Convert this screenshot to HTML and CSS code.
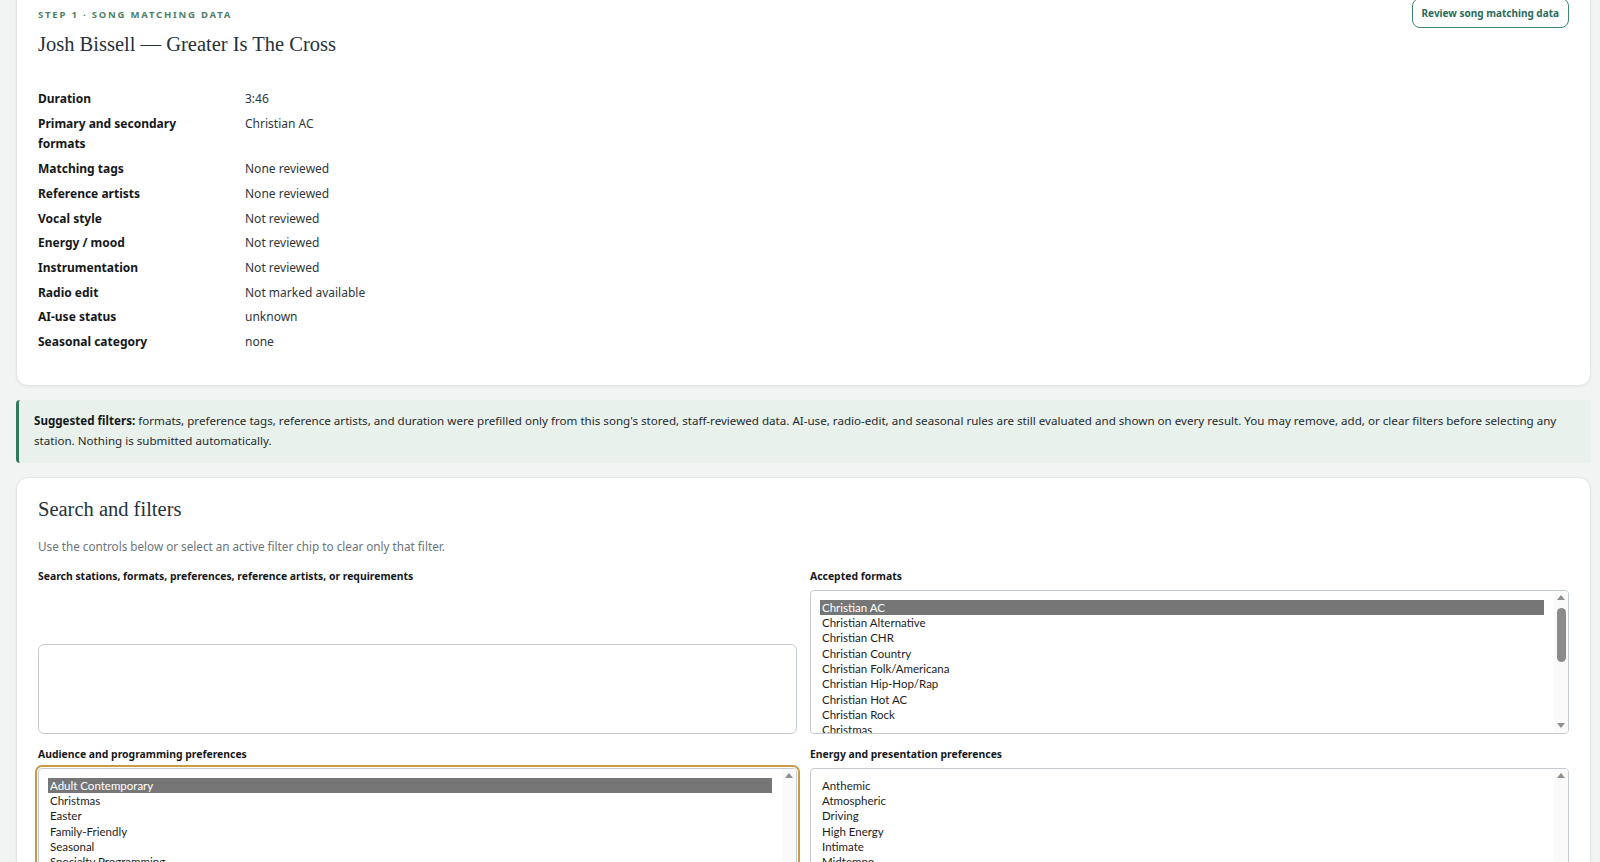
FILE: index.html
```html
<!doctype html>
<html lang="en">
<head>
    <meta charset="utf-8">
    <meta name="viewport" content="width=device-width, initial-scale=1">
    <title>Station matching — Josh Bissell</title>
    <link rel="stylesheet" href="styles.css">
</head>
<body>
<main class="page">

    <!-- Step 1: what we know about the song -->
    <section class="card song-card">
        <div class="card-head">
            <div>
                <p class="eyebrow">Step 1 · Song matching data</p>
                <h2 class="song-title">Josh Bissell — Greater Is The Cross</h2>
            </div>
            <button type="button" class="btn-outline">Review song matching data</button>
        </div>

        <dl class="song-data">
            <dt>Duration</dt><dd>3:46</dd>
            <dt>Primary and secondary formats</dt><dd>Christian AC</dd>
            <dt>Matching tags</dt><dd>None reviewed</dd>
            <dt>Reference artists</dt><dd>None reviewed</dd>
            <dt>Vocal style</dt><dd>Not reviewed</dd>
            <dt>Energy / mood</dt><dd>Not reviewed</dd>
            <dt>Instrumentation</dt><dd>Not reviewed</dd>
            <dt>Radio edit</dt><dd>Not marked available</dd>
            <dt>AI-use status</dt><dd>unknown</dd>
            <dt>Seasonal category</dt><dd>none</dd>
        </dl>
    </section>

    <p class="notice"><strong>Suggested filters:</strong> formats, preference tags, reference artists, and duration were prefilled only from this song's stored, staff-reviewed data. AI-use, radio-edit, and seasonal rules are still evaluated and shown on every result. You may remove, add, or clear filters before selecting any station. Nothing is submitted automatically.</p>

    <!-- Filters -->
    <section class="card filters">
        <h2 class="section-title">Search and filters</h2>
        <p class="hint">Use the controls below or select an active filter chip to clear only that filter.</p>

        <div class="filter-grid">
            <div class="field">
                <label for="search">Search stations, formats, preferences, reference artists, or requirements</label>
                <textarea id="search" class="search-box"></textarea>
            </div>

            <div class="field">
                <span class="field-label" id="formats-label">Accepted formats</span>
                <div class="listbox" role="listbox" aria-multiselectable="true" aria-labelledby="formats-label">
                    <div class="listbox-options">
                        <div class="opt is-selected" role="option" aria-selected="true">Christian AC</div>
                        <div class="opt" role="option">Christian Alternative</div>
                        <div class="opt" role="option">Christian CHR</div>
                        <div class="opt" role="option">Christian Country</div>
                        <div class="opt" role="option">Christian Folk/Americana</div>
                        <div class="opt" role="option">Christian Hip-Hop/Rap</div>
                        <div class="opt" role="option">Christian Hot AC</div>
                        <div class="opt" role="option">Christian Rock</div>
                        <div class="opt" role="option">Christmas</div>
                    </div>
                    <div class="scrollbar">
                        <span class="sb-up"></span>
                        <span class="sb-track"><span class="sb-thumb"></span></span>
                        <span class="sb-down"></span>
                    </div>
                </div>
            </div>

            <div class="field">
                <span class="field-label" id="audience-label">Audience and programming preferences</span>
                <div class="listbox is-focused" role="listbox" aria-multiselectable="true" aria-labelledby="audience-label">
                    <div class="listbox-options">
                        <div class="opt is-selected" role="option" aria-selected="true">Adult Contemporary</div>
                        <div class="opt" role="option">Christmas</div>
                        <div class="opt" role="option">Easter</div>
                        <div class="opt" role="option">Family-Friendly</div>
                        <div class="opt" role="option">Seasonal</div>
                        <div class="opt" role="option">Specialty Programming</div>
                        <div class="opt" role="option">Sunday Morning</div>
                        <div class="opt" role="option">Weekend</div>
                        <div class="opt" role="option">Youth</div>
                    </div>
                    <div class="scrollbar">
                        <span class="sb-up"></span>
                        <span class="sb-track"></span>
                        <span class="sb-down"></span>
                    </div>
                </div>
            </div>

            <div class="field">
                <span class="field-label" id="energy-label">Energy and presentation preferences</span>
                <div class="listbox" role="listbox" aria-multiselectable="true" aria-labelledby="energy-label">
                    <div class="listbox-options">
                        <div class="opt" role="option">Anthemic</div>
                        <div class="opt" role="option">Atmospheric</div>
                        <div class="opt" role="option">Driving</div>
                        <div class="opt" role="option">High Energy</div>
                        <div class="opt" role="option">Intimate</div>
                        <div class="opt" role="option">Midtempo</div>
                        <div class="opt" role="option">Reflective</div>
                        <div class="opt" role="option">Uplifting</div>
                        <div class="opt" role="option">Worship-Led</div>
                    </div>
                    <div class="scrollbar">
                        <span class="sb-up"></span>
                        <span class="sb-track"></span>
                        <span class="sb-down"></span>
                    </div>
                </div>
            </div>
        </div>
    </section>

</main>
</body>
</html>
```

FILE: styles.css
```css
/* Reset */
* { box-sizing: border-box; padding: 0; margin: 0; }

/* CSS Variables */
:root {
    --page: #f2f4f3;
    --card-line: #e2e7e5;
    --ink: #1c1f22;
    --ink-soft: #30363b;
    --heading: #25313b;
    --muted: #6c7479;
    --green: #2f7a5a;
    --green-text: #2b6a59;
    --green-wash: #e8f1ec;
    --field-line: #c5ccd1;
    --focus: #c99b45;
    --sans: "Noto Sans", "Segoe UI", sans-serif;
    --serif: "Liberation Serif", serif;
}

html { scrollbar-width: none; }

body {
    background-color: var(--page);
    font-family: var(--sans);
    font-size: 12px;
    color: var(--ink);
}

/* Page Style */
.page {
    display: flex;
    flex-direction: column;
    gap: 14px;
    margin-top: -24px;
    padding: 0 9px 40px 16px;
}

.card {
    background: #fff;
    border: 1px solid var(--card-line);
    border-radius: 12px;
    box-shadow: 0 1px 3px rgba(30, 50, 40, 0.06);
}

/* Song card */
.song-card { padding: 21px 21px 32px; }
.card-head {
    display: flex;
    justify-content: space-between;
    align-items: flex-start;
}
.eyebrow {
    margin-top: 10px;
    font-size: 9.5px;
    line-height: 14px;
    font-weight: 700;
    letter-spacing: 1.8px;
    text-transform: uppercase;
    color: #4f8069;
}
.song-title,
.section-title {
    font-family: var(--serif);
    font-size: 20.5px;
    font-weight: 400;
    color: var(--heading);
}
.song-title { margin-top: 9px; line-height: 26px; }

.btn-outline {
    height: 30px;
    padding: 0 9px;
    background: #fff;
    border: 1px solid #3f8470;
    border-radius: 8px;
    font-family: var(--sans);
    font-size: 10px;
    font-weight: 700;
    color: var(--green-text);
}

.song-data {
    display: grid;
    grid-template-columns: 180px 1fr;
    column-gap: 27px;
    row-gap: 4px;
    margin-top: 32px;
    line-height: 20.7px;
}
.song-data dt { font-weight: 700; color: #15181a; }
.song-data dd { color: var(--ink-soft); }

/* Suggested filters notice */
.notice {
    padding: 11px 15px 12px;
    background: var(--green-wash);
    border-left: 3px solid var(--green);
    border-radius: 4px;
    font-size: 11.6px;
    line-height: 20px;
    color: #272b2e;
}
.notice strong { color: #15181a; }

/* Filters card */
.filters { padding: 19px 21px 24px; }
.section-title { line-height: 24px; }
.hint {
    margin-top: 16px;
    line-height: 18px;
    font-size: 11.7px;
    color: var(--muted);
}

.filter-grid {
    display: grid;
    grid-template-columns: 1fr 1fr;
    column-gap: 13px;
    row-gap: 12px;
    margin-top: 13px;
}
.field {
    display: flex;
    flex-direction: column;
}
.field label,
.field-label {
    font-size: 10.4px;
    line-height: 16px;
    font-weight: 700;
    color: #15181a;
    margin-bottom: 6px;
}

.search-box {
    margin-top: auto;
    height: 90px;
    width: 100%;
    resize: none;
    border: 1px solid var(--field-line);
    border-radius: 6px;
    background: #fff;
}

/* Multi-select list boxes */
.listbox {
    display: flex;
    height: 144px;
    border: 1px solid var(--field-line);
    border-radius: 4px;
    background: #fff;
    overflow: hidden;
}
.listbox.is-focused {
    outline: 2px solid var(--focus);
    outline-offset: 1px;
}
.listbox-options {
    flex: 1;
    overflow: hidden;
    padding: 9px 10px 0 9px;
    font-family: Lato, sans-serif;
    font-size: 11.5px;
    line-height: 15.3px;
    color: #1d1d1d;
}
.opt {
    padding: 0 2px;
    white-space: nowrap;
}
.opt.is-selected {
    background: #767676;
    color: #fff;
}

.scrollbar {
    display: flex;
    flex-direction: column;
    width: 14px;
    background: #fafafa;
}
.sb-up,
.sb-down {
    display: flex;
    justify-content: center;
    align-items: center;
    height: 14px;
}
.sb-up::before,
.sb-down::before {
    content: "";
    border-left: 4px solid transparent;
    border-right: 4px solid transparent;
}
.sb-up::before { border-bottom: 5px solid #8f8f8f; }
.sb-down::before { border-top: 5px solid #8f8f8f; }
.sb-track {
    flex: 1;
    padding: 3px 2px 3px 3px;
}
.sb-thumb {
    display: block;
    height: 54px;
    background: #8b8b8b;
    border-radius: 5px;
}
```
